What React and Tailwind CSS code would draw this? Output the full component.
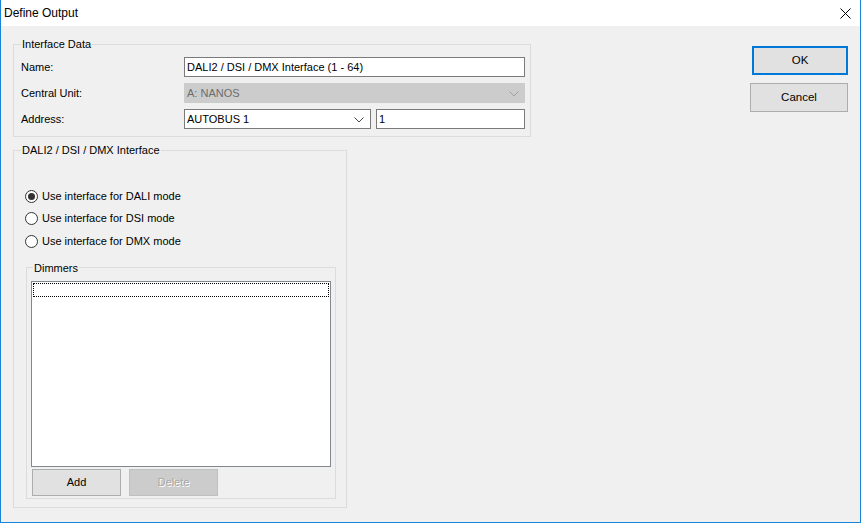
import React from "react";

const font = { fontFamily: '"Liberation Sans", Arial, sans-serif' };

function Chevron({ color }) {
  return (
    <svg width="10" height="6" viewBox="0 0 10 6" className="shrink-0">
      <path d="M0.5 0.5 L5 5 L9.5 0.5" fill="none" stroke={color} strokeWidth="1" />
    </svg>
  );
}

function Radio({ checked, label }) {
  return (
    <div className="flex items-center h-[22.5px]">
      <span className="w-[13px] h-[13px] rounded-full border border-[#333333] bg-white flex items-center justify-center shrink-0">
        {checked && <span className="w-[7px] h-[7px] rounded-full bg-[#333333]" />}
      </span>
      <span className="ml-[4px] text-[11px] text-black leading-none">{label}</span>
    </div>
  );
}

export default function App() {
  return (
    <div
      style={font}
      className="w-[861px] h-[523px] flex flex-col bg-[#f0f0f0] border-x border-b border-[#1883d7] text-[11px] text-black overflow-hidden"
    >
      {/* Title bar */}
      <div className="h-[26px] bg-white flex items-center justify-between shrink-0">
        <span className="ml-[3px] text-[12px] leading-none">Define Output</span>
        <svg width="11" height="11" viewBox="0 0 11 11" className="mr-[9px]">
          <path d="M0.5 0.5 L10.5 10.5 M10.5 0.5 L0.5 10.5" stroke="#000" strokeWidth="1" />
        </svg>
      </div>

      <div className="flex flex-1">
        {/* Left column */}
        <div className="flex flex-col pl-[12px] pt-[11px]">
          {/* Interface Data */}
          <fieldset className="w-[518px] border border-[#dcdcdc] pl-[7px] pr-[5px] pb-[7px]">
            <legend className="px-[1px] text-[11px] leading-[14px]">Interface Data</legend>
            <div className="flex flex-col gap-[6px] pt-[6px]">
              <div className="flex items-center">
                <span className="w-[163px] shrink-0">Name:</span>
                <div className="w-[341px] h-[20px] bg-white border border-[#7a7a7a] flex items-center pl-[2px] pt-[1px]">
                  DALI2 / DSI / DMX Interface (1 - 64)
                </div>
              </div>
              <div className="flex items-center">
                <span className="w-[163px] shrink-0">Central Unit:</span>
                <div className="w-[341px] h-[20px] bg-[#cccccc] border border-[#cccccc] flex items-center justify-between pl-[2px] pr-[5px] pt-[1px] text-[#6d6d6d]">
                  <span>A: NANOS</span>
                  <Chevron color="#a0a0a0" />
                </div>
              </div>
              <div className="flex items-center">
                <span className="w-[163px] shrink-0">Address:</span>
                <div className="w-[187px] h-[20px] bg-white border border-[#7a7a7a] flex items-center justify-between pl-[2px] pr-[6px] pt-[1px]">
                  <span>AUTOBUS 1</span>
                  <Chevron color="#444444" />
                </div>
                <div className="ml-[5px] w-[149px] h-[20px] bg-white border border-[#7a7a7a] flex items-center pl-[2px] pt-[1px]">
                  1
                </div>
              </div>
            </div>
          </fieldset>

          {/* DALI2 / DSI / DMX Interface */}
          <fieldset className="mt-[6px] w-[334px] border border-[#dcdcdc] pl-[11px] pr-[10px] pb-[8px]">
            <legend className="-ml-[4px] px-[1px] text-[11px] leading-[14px]">DALI2 / DSI / DMX Interface</legend>
            <div className="flex flex-col pt-[28px]">
              <Radio checked label="Use interface for DALI mode" />
              <Radio label="Use interface for DSI mode" />
              <Radio label="Use interface for DMX mode" />
            </div>

            {/* Dimmers */}
            <fieldset className="mt-[8px] ml-[1px] w-[310px] border border-[#dcdcdc] pl-[4px] pb-[2px]">
              <legend className="ml-[2px] px-[1px] text-[11px] leading-[14px]">Dimmers</legend>
              <div className="mt-[6px] w-[300px] h-[186px] bg-white border border-[#828790] p-[1px]">
                <div className="h-[14px] border border-dotted border-black" />
              </div>
              <div className="flex gap-[8px] mt-[2px] ml-[1px]">
                <button className="w-[89px] h-[27px] bg-[#e1e1e1] border border-[#adadad] text-[11px]">Add</button>
                <button
                  className="w-[89px] h-[27px] bg-[#cccccc] border border-[#bfbfbf] text-[11px] text-[#a7a7a7]"
                  style={{ textShadow: "1px 1px 0 #ffffff" }}
                >
                  Delete
                </button>
              </div>
            </fieldset>
          </fieldset>
        </div>

        {/* Right column */}
        <div className="flex-1 flex flex-col items-end pr-[12px] pt-[20px]">
          <button className="w-[96px] h-[29px] bg-[#e1e1e1] border-2 border-[#0078d7] text-[11.5px]">OK</button>
          <button className="mt-[8px] w-[98px] h-[29px] bg-[#e1e1e1] border border-[#adadad] text-[11.5px]">Cancel</button>
        </div>
      </div>
    </div>
  );
}
